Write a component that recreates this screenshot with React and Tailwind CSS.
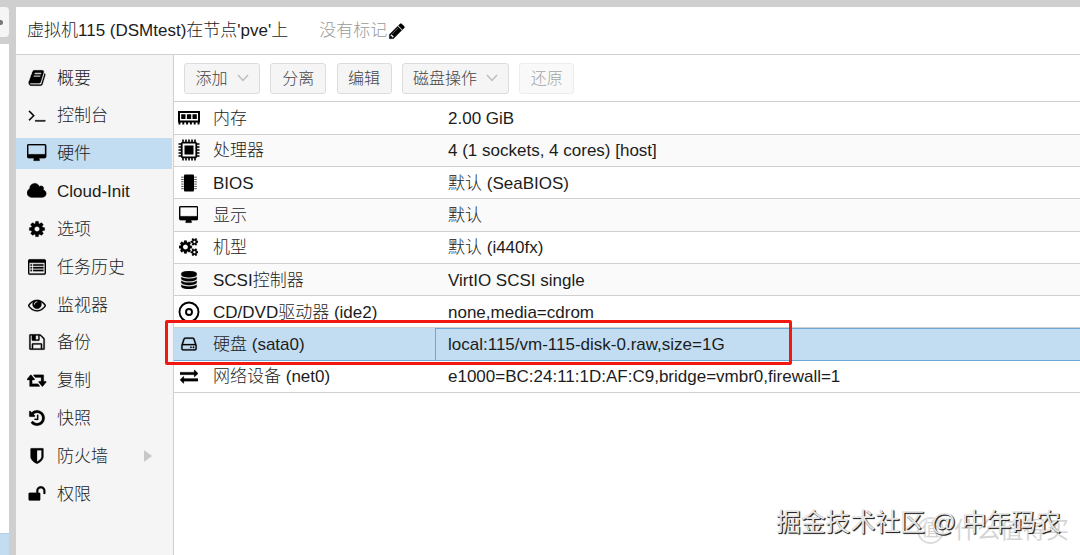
import React, { useState } from 'react';
import clsx from 'clsx';

// Font Awesome 4 outlines, 1792 units per em
const PATHS = {
  book: 'M1703 478q40 57 18 129l-275 906q-19 64-76.5 107.5t-122.5 43.5h-923q-77 0-148.5-53.5t-99.5-131.5q-24-67-2-127 0-4 3-27t4-37q1-8-3-21.5t-3-19.5q2-11 8-21t16.5-23.5 16.5-23.5q23-38 45-91.5t30-91.5q3-10 .5-30t-.5-28q3-11 17-28t17-23q21-36 42-92t25-90q1-9-2.5-32t.5-28q4-13 22-30.5t22-22.5q19-26 42.5-84.5t27.5-96.5q1-8-3-25.5t-2-26.5q2-8 9-18t18-23 17-21q8-12 16.5-30.5t15-35 16-36 19.5-32 26.5-23.5 36-11.5 47.5 5.5l-1 3q38-9 51-9h761q74 0 114 56t18 130l-274 906q-36 119-71.5 153.5t-128.5 34.5h-869q-27 0-38 15-11 16-1 43 24 70 144 70h923q29 0 56-15.5t35-41.5l300-987q7-22 5-57 38 15 59 43zm-1064 2q-4 13 2 22.5t20 9.5h608q13 0 25.5-9.5t16.5-22.5l21-64q4-13-2-22.5t-20-9.5h-608q-13 0-25.5 9.5t-16.5 22.5zm-83 256q-4 13 2 22.5t20 9.5h608q13 0 25.5-9.5t16.5-22.5l21-64q4-13-2-22.5t-20-9.5h-608q-13 0-25.5 9.5t-16.5 22.5z',
  terminal: 'M649 983l-466 466q-10 10-23 10t-23-10l-50-50q-10-10-10-23t10-23l393-393-393-393q-10-10-10-23t10-23l50-50q10-10 23-10t23 10l466 466q10 10 10 23t-10 23zm1079 457v64q0 14-9 23t-23 9h-960q-14 0-23-9t-9-23v-64q0-14 9-23t23-9h960q14 0 23 9t9 23z',
  desktop: 'M1728 992v-832q0-13-9.5-22.5t-22.5-9.5h-1600q-13 0-22.5 9.5t-9.5 22.5v832q0 13 9.5 22.5t22.5 9.5h1600q13 0 22.5-9.5t9.5-22.5zm128-832v1088q0 66-47 113t-113 47h-544q0 37 16 77.5t32 71 16 43.5q0 26-19 45t-45 19h-512q-26 0-45-19t-19-45q0-14 16-44t32-70 16-78h-544q-66 0-113-47t-47-113v-1088q0-66 47-113t113-47h1600q66 0 113 47t47 113z',
  cloud: 'M1856 1152q0 159-112.5 271.5t-271.5 112.5h-1088q-185 0-316.5-131.5t-131.5-316.5q0-132 71-241.5t187-163.5q-2-28-2-43 0-212 150-362t362-150q158 0 286.5 88t187.5 230q70-62 166-62 106 0 181 75t75 181q0 75-41 138 129 30 213 134.5t84 239.5z',
  cog: 'M1152 896q0-106-75-181t-181-75-181 75-75 181 75 181 181 75 181-75 75-181zm512-109v222q0 12-8 23t-20 13l-185 28q-19 54-39 91 35 50 107 138 10 12 10 25t-9 23q-27 37-99 108t-94 71q-12 0-26-9l-138-108q-44 23-91 38-16 136-29 186-7 28-36 28h-222q-14 0-24.5-8.5t-11.5-21.5l-28-184q-49-16-90-37l-141 107q-10 9-25 9-14 0-25-11-126-114-165-168-7-10-7-23 0-12 8-23 15-21 51-66.5t54-70.5q-27-50-41-99l-183-27q-13-2-21-12.5t-8-23.5v-222q0-12 8-23t19-13l186-28q14-46 39-92-40-57-107-138-10-12-10-24 0-10 9-23 26-36 98.5-107.5t94.5-71.5q13 0 26 10l138 107q44-23 91-38 16-136 29-186 7-28 36-28h222q14 0 24.5 8.5t11.5 21.5l28 184q49 16 90 37l142-107q9-9 24-9 13 0 25 10 129 119 165 170 7 8 7 22 0 12-8 23-15 21-51 66.5t-54 70.5q26 50 41 98l183 28q13 2 21 12.5t8 23.5z',
  list: 'M160 128h1472q66 0 113 47t47 113v1216q0 66-47 113t-113 47H160q-66 0-113-47t-47-113V288q0-66 47-113t113-47zM128 480v1024q0 32 32 32h1472q32 0 32-32V480zM256 620h128v160H256zM512 620h1024v160H512zM256 890h128v160H256zM512 890h1024v160H512zM256 1160h128v160H256zM512 1160h1024v160H512z',
  eye: 'M1664 960q-152-236-381-353 61 104 61 225 0 185-131.5 316.5t-316.5 131.5-316.5-131.5-131.5-316.5q0-121 61-225-229 117-381 353 133 205 333.5 326.5t434.5 121.5 434.5-121.5 333.5-326.5zm-720-384q0-20-14-34t-34-14q-125 0-214.5 89.5t-89.5 214.5q0 20 14 34t34 14 34-14 14-34q0-86 61-147t147-61q20 0 34-14t14-34zm848 384q0 34-20 69-140 230-376.5 368.5t-499.5 138.5-499.5-139-376.5-368q-20-35-20-69t20-69q140-229 376.5-368t499.5-139 499.5 139 376.5 368q20 35 20 69z',
  floppy: 'M512 1536h768v-384h-768v384zm896 0h128v-896q0-14-10-38.5t-20-34.5l-281-281q-10-10-34-20t-39-10v416q0 40-28 68t-68 28h-576q-40 0-68-28t-28-68v-416h-128v1280h128v-416q0-40 28-68t68-28h832q40 0 68 28t28 68v416zm-384-928v-320q0-13-9.5-22.5t-22.5-9.5h-192q-13 0-22.5 9.5t-9.5 22.5v320q0 13 9.5 22.5t22.5 9.5h192q13 0 22.5-9.5t9.5-22.5zm640 32v928q0 40-28 68t-68 28h-1344q-40 0-68-28t-28-68v-1344q0-40 28-68t68-28h928q40 0 88 20t76 48l280 280q28 28 48 76t20 88z',
  retweet: 'M1216 1504q0 13-9.5 22.5t-22.5 9.5h-960q-8 0-13.5-2t-9-7-5.5-8-3-11.5-1-11.5v-600h-192q-26 0-45-19t-19-45q0-24 15-41l320-384q19-22 49-22t49 22l320 384q15 17 15 41 0 26-19 45t-45 19h-192v384h576q16 0 25 11l160 192q7 10 7 21zm640-416q0 24-15 41l-320 384q-20 23-49 23t-49-23l-320-384q-15-17-15-41 0-26 19-45t45-19h192v-384h-576q-16 0-25-12l-160-192q-7-9-7-20 0-13 9.5-22.5t22.5-9.5h960q8 0 13.5 2t9 7 5.5 8 3 11.5 1 11.5v600h192q26 0 45 19t19 45z',
  history: 'M1664 896q0 156-61 298t-164 245-245 164-298 61q-172 0-327-72.5t-264-204.5q-7-10-6.5-22.5t8.5-20.5l137-138q10-9 25-9 16 2 23 12 73 95 179 147t225 52q104 0 198.5-40.5t163.5-109.5 109.5-163.5 40.5-198.5-40.5-198.5-109.5-163.5-163.5-109.5-198.5-40.5q-98 0-188 35.5t-160 101.5l137 138q31 30 14 69-17 40-59 40h-448q-26 0-45-19t-19-45v-448q0-42 40-59 39-17 69 14l130 129q107-101 244.5-156.5t284.5-55.5q156 0 298 61t245 164 164 245 61 298zm-640-288v448q0 14-9 23t-23 9h-320q-14 0-23-9t-9-23v-64q0-14 9-23t23-9h224v-352q0-14 9-23t23-9h64q14 0 23 9t9 23z',
  shield: 'M1344 960v-640h-448v1137q119-63 213-137 235-184 235-360zm192-768v768q0 86-33.5 170.5t-83 150-118 127.5-126.5 103-121 77.5-89.5 49.5-42.5 20q-12 6-26 6t-26-6q-16-7-42.5-20t-89.5-49.5-121-77.5-126.5-103-118-127.5-83-150-33.5-170.5v-768q0-26 19-45t45-19h1152q26 0 45 19t19 45z',
  unlock: 'M1728 576v256q0 26-19 45t-45 19h-64q-26 0-45-19t-19-45v-256q0-106-75-181t-181-75-181 75-75 181v192h96q40 0 68 28t28 68v576q0 40-28 68t-68 28h-960q-40 0-68-28t-28-68v-576q0-40 28-68t68-28h672v-192q0-185 131.5-316.5t316.5-131.5 316.5 131.5 131.5 316.5z',
  cogs: 'M896 896q0-106-75-181t-181-75-181 75-75 181 75 181 181 75 181-75 75-181zm768 512q0-52-38-90t-90-38-90 38-38 90q0 53 37.5 90.5t90.5 37.5 90.5-37.5 37.5-90.5zm0-1024q0-52-38-90t-90-38-90 38-38 90q0 53 37.5 90.5t90.5 37.5 90.5-37.5 37.5-90.5zm-384 421v185q0 10-7 19.5t-16 10.5l-155 24q-11 35-32 76 34 48 90 115 7 11 7 20 0 12-7 19-23 30-82.5 89.5t-78.5 59.5q-11 0-21-7l-115-90q-37 19-77 31-11 108-23 155-7 24-30 24h-186q-11 0-20-7.5t-10-17.5l-23-153q-34-10-75-31l-118 89q-7 7-20 7-11 0-21-8-144-133-144-160 0-9 7-19 10-14 41-53t47-61q-23-44-35-82l-152-24q-10-1-17-9.5t-7-19.5v-185q0-10 7-19.5t16-10.5l155-24q11-35 32-76-34-48-90-115-7-11-7-20 0-12 7-20 22-30 82-89t79-59q11 0 21 7l115 90q34-18 77-32 11-108 23-154 7-24 30-24h186q11 0 20 7.5t10 17.5l23 153q34 10 75 31l118-89q8-7 20-7 11 0 21 8 144 133 144 160 0 8-7 19-12 16-42 54t-45 60q23 48 34 82l152 23q10 2 17 10.5t7 19.5zm640 533v140q0 16-149 31-12 27-30 52 51 113 51 138 0 4-4 7-122 71-124 71-8 0-46-47t-52-68q-20 2-30 2t-30-2q-14 21-52 68t-46 47q-2 0-124-71-4-3-4-7 0-25 51-138-18-25-30-52-149-15-149-31v-140q0-16 149-31 13-29 30-52-51-113-51-138 0-4 4-7 4-2 35-20t59-34 30-16q8 0 46 46.5t52 67.5q20-2 30-2t30 2q51-71 92-112l6-2q4 0 124 70 4 3 4 7 0 25-51 138 17 23 30 52 149 15 149 31zm0-1024v140q0 16-149 31-12 27-30 52 51 113 51 138 0 4-4 7-122 71-124 71-8 0-46-47t-52-68q-20 2-30 2t-30-2q-14 21-52 68t-46 47q-2 0-124-71-4-3-4-7 0-25 51-138-18-25-30-52-149-15-149-31v-140q0-16 149-31 13-29 30-52-51-113-51-138 0-4 4-7 4-2 35-20t59-34 30-16q8 0 46 46.5t52 67.5q20-2 30-2t30 2q51-71 92-112l6-2q4 0 124 70 4 3 4 7 0 25-51 138 17 23 30 52 149 15 149 31z',
  database: 'M896 768q237 0 443-43t325-127v170q0 69-103 128t-280 93.5-385 34.5-385-34.5-280-93.5-103-128v-170q119 84 325 127t443 43zm0 768q237 0 443-43t325-127v170q0 69-103 128t-280 93.5-385 34.5-385-34.5-280-93.5-103-128v-170q119 84 325 127t443 43zm0-384q237 0 443-43t325-127v170q0 69-103 128t-280 93.5-385 34.5-385-34.5-280-93.5-103-128v-170q119 84 325 127t443 43zm0-1152q208 0 385 34.5t280 93.5 103 128v128q0 69-103 128t-280 93.5-385 34.5-385-34.5-280-93.5-103-128v-128q0-69 103-128t280-93.5 385-34.5z',
  hdd: 'M1168 1216q0 33-23.5 56.5t-56.5 23.5-56.5-23.5-23.5-56.5 23.5-56.5 56.5-23.5 56.5 23.5 23.5 56.5zm256 0q0 33-23.5 56.5t-56.5 23.5-56.5-23.5-23.5-56.5 23.5-56.5 56.5-23.5 56.5 23.5 23.5 56.5zm112 160v-320q0-13-9.5-22.5t-22.5-9.5h-1216q-13 0-22.5 9.5t-9.5 22.5v320q0 13 9.5 22.5t22.5 9.5h1216q13 0 22.5-9.5t9.5-22.5zm-1230-480h1180l-157-482q-4-13-16-21.5t-26-8.5h-782q-14 0-26 8.5t-16 21.5zm1358 160v320q0 66-47 113t-113 47h-1216q-66 0-113-47t-47-113v-320q0-25 16-75l197-606q17-53 63-86t101-33h782q55 0 101 33t63 86l197 606q16 50 16 75z',
  exchange: 'M1792 1184v192q0 13-9.5 22.5t-22.5 9.5h-1376v192q0 13-9.5 22.5t-22.5 9.5q-12 0-24-10l-319-320q-9-9-9-22 0-14 9-23l320-320q9-9 23-9 13 0 22.5 9.5t9.5 22.5v192h1376q13 0 22.5 9.5t9.5 22.5zm0-544q0 14-9 23l-320 320q-9 9-23 9-13 0-22.5-9.5t-9.5-22.5v-192h-1376q-13 0-22.5-9.5t-9.5-22.5v-192q0-13 9.5-22.5t22.5-9.5h1376v-192q0-14 9-23t23-9q12 0 24 10l319 319q9 9 9 23z',
  pencil: 'M491 1536l91-91-235-235-91 91v107h128v128h107zm523-928q0-22-22-22-10 0-17 7l-542 542q-7 7-7 17 0 22 22 22 10 0 17-7l542-542q7-7 7-17zm-54-192l416 416-832 832h-416v-416zm683 96q0 53-37 90l-166 166-416-416 166-165q36-38 90-38 53 0 91 38l235 234q37 39 37 91z',
};

const BOXES = {
  desktop: '-64 0 1920 1792',
  cloud: '-64 0 1920 1792',
  retweet: '-64 0 1920 1792',
  cogs: '0 0 1920 1792',
};

function Fa({ name, className = 'h-[18px]' }) {
  return (
    <svg viewBox={BOXES[name] || '0 0 1792 1792'} className={clsx('shrink-0', className)} fill="currentColor" fillRule="evenodd" stroke="currentColor" strokeWidth="25">
      <path d={PATHS[name]} />
    </svg>
  );
}

function MemoryIcon() {
  return (
    <svg viewBox="0 0 22 14" className="w-[22px] h-[14px]" fill="none" stroke="#000">
      <path d="M1 1h20v9.5H1z" strokeWidth="2" />
      <path d="M3.2 3.2h4.3v4.8H3.2zM8.9 3.2h4.3v4.8H8.9zM14.5 3.2h4.3v4.8h-4.3z" fill="#000" stroke="none" />
      <path d="M1.5 11v2.5M5.3 11v2.5M9.1 11v2.5M12.9 11v2.5M16.7 11v2.5M20.5 11v2.5" strokeWidth="1.9" />
    </svg>
  );
}

function CpuIcon() {
  return (
    <svg viewBox="0 0 22 22" className="w-[22px] h-[22px]" fill="none" stroke="#000">
      <rect x="3.7" y="3.7" width="14.6" height="14.6" rx="1" strokeWidth="1.8" />
      <rect x="6.5" y="6.5" width="9" height="9" fill="#000" stroke="none" />
      <path d="M5 0.5v3M8 0.5v3M11 0.5v3M14 0.5v3M17 0.5v3M5 18.5v3M8 18.5v3M11 18.5v3M14 18.5v3M17 18.5v3M0.5 5h3M0.5 8h3M0.5 11h3M0.5 14h3M0.5 17h3M18.5 5h3M18.5 8h3M18.5 11h3M18.5 14h3M18.5 17h3" strokeWidth="1.6" />
    </svg>
  );
}

function BiosIcon() {
  return (
    <svg viewBox="0 0 18 18" className="w-[18px] h-[18px]">
      <rect x="4" y="0.5" width="10" height="17" rx="1" fill="#000" />
      <path d="M1.2 3.2h2.6M1.2 5.5h2.6M1.2 7.8h2.6M1.2 10.1h2.6M1.2 12.4h2.6M1.2 14.7h2.6M14.2 3.2h2.6M14.2 5.5h2.6M14.2 7.8h2.6M14.2 10.1h2.6M14.2 12.4h2.6M14.2 14.7h2.6" stroke="#555" />
    </svg>
  );
}

function DiscIcon() {
  return (
    <svg viewBox="0 0 22 22" className="w-[22px] h-[22px]" fill="none" stroke="#000" strokeWidth="1.9">
      <circle cx="11" cy="11" r="9.5" />
      <circle cx="11" cy="11" r="3" />
    </svg>
  );
}

function Chevron() {
  return (
    <svg viewBox="0 0 12 8" className="w-3 h-2 ml-[9px]" fill="none" stroke="#bdbdbd" strokeWidth="1.5">
      <path d="M1 1l5 5.5L11 1" />
    </svg>
  );
}

const NAV = [
  { icon: 'book', label: '概要' },
  { icon: 'terminal', label: '控制台' },
  { icon: 'desktop', label: '硬件' },
  { icon: 'cloud', label: 'Cloud-Init' },
  { icon: 'cog', label: '选项' },
  { icon: 'list', label: '任务历史' },
  { icon: 'eye', label: '监视器' },
  { icon: 'floppy', label: '备份' },
  { icon: 'retweet', label: '复制' },
  { icon: 'history', label: '快照' },
  { icon: 'shield', label: '防火墙', sub: true },
  { icon: 'unlock', label: '权限' },
];

const HARDWARE = [
  { id: 'memory', icon: <MemoryIcon />, name: '内存', value: '2.00 GiB' },
  { id: 'cpu', icon: <CpuIcon />, name: '处理器', value: '4 (1 sockets, 4 cores) [host]' },
  { id: 'bios', icon: <BiosIcon />, name: 'BIOS', value: '默认 (SeaBIOS)' },
  { id: 'vga', icon: <Fa name="desktop" />, name: '显示', value: '默认' },
  { id: 'machine', icon: <Fa name="cogs" />, name: '机型', value: '默认 (i440fx)' },
  { id: 'scsihw', icon: <Fa name="database" />, name: 'SCSI控制器', value: 'VirtIO SCSI single' },
  { id: 'ide2', icon: <DiscIcon />, name: 'CD/DVD驱动器 (ide2)', value: 'none,media=cdrom' },
  { id: 'sata0', icon: <Fa name="hdd" />, name: '硬盘 (sata0)', value: 'local:115/vm-115-disk-0.raw,size=1G' },
  { id: 'net0', icon: <Fa name="exchange" />, name: '网络设备 (net0)', value: 'e1000=BC:24:11:1D:AF:C9,bridge=vmbr0,firewall=1' },
];

const BUTTONS = [
  { label: '添加', menu: true, width: 'w-[76px]' },
  { label: '分离', width: 'w-[56px]' },
  { label: '编辑', width: 'w-[55px]' },
  { label: '磁盘操作', menu: true, width: 'w-[107px]' },
  { label: '还原', disabled: true, width: 'w-[55px]' },
];

export default function App() {
  const [tab, setTab] = useState('硬件');
  const [selected, setSelected] = useState('sata0');

  return (
    <div className="relative flex w-[1080px] h-[555px] overflow-hidden bg-[#cfcfcf] pt-[7px] text-[17px] leading-5 font-light text-[#1c1c1c] font-['Liberation_Sans','Noto_Sans_CJK_SC',sans-serif]">
      {/* edge of the resource tree */}
      <div className="w-[9px] mr-[7px] shrink-0 flex flex-col">
        <div className="h-[30px] mb-[7px] bg-[#f5f5f5] rounded-r-sm flex items-center overflow-hidden">
          <span className="w-[3px] h-[5px] bg-[#777] rounded-r-full" />
        </div>
        <div className="flex-1 bg-white" />
        <div className="h-[22px] bg-[#c2ddf2] border-t border-[#b5cfe4]" />
      </div>

      <div className="flex-1 flex flex-col bg-white min-w-0">
        <div className="h-[48px] shrink-0 flex items-center pl-[11px] border-b border-[#d0d0d0]">
          <h1 className="whitespace-pre pt-px">虚拟机115 (DSMtest)在节点'pve'上</h1>
          <span className="ml-[31px] pt-px text-[#9a9a9a]">没有标记</span>
          <Fa name="pencil" className="h-[18px] ml-px text-black" />
        </div>

        <div className="flex flex-1 min-h-0">
          <nav className="w-[158px] shrink-0 bg-[#f5f5f5] border-r border-[#d0d0d0] pt-[4px]">
            {NAV.map(n => (
              <div key={n.label} onClick={() => setTab(n.label)} className="h-[37.85px] pt-[3px] pr-px">
                <div className={clsx('h-[31px] flex items-center pl-[11px]', tab === n.label && 'bg-[#c2ddf2]')}>
                  <span className="w-5 flex justify-center text-black"><Fa name={n.icon} /></span>
                  <span className="ml-[10px] pt-[2px] whitespace-nowrap">{n.label}</span>
                  {n.sub && <span className="ml-auto mr-[20px] border-y-[6px] border-y-transparent border-l-[8px] border-l-[#c8c8c8]" />}
                </div>
              </div>
            ))}
          </nav>

          <main className="flex-1 flex flex-col min-w-0">
            <div className="h-[47.4px] shrink-0 flex items-center pl-[10px] border-b border-[#d0d0d0] text-[16px]">
              {BUTTONS.map(b => (
                <button key={b.label} disabled={b.disabled} className={clsx('h-[31px] mr-[10.3px] flex items-center justify-center rounded-[3px] border border-[#dcdcdc] bg-[#f5f5f5] text-[#444]', b.width, b.disabled && 'opacity-50')}>
                  <span className="pt-px">{b.label}</span>
                  {b.menu && <Chevron />}
                </button>
              ))}
            </div>

            {HARDWARE.map((h, i) => {
              const active = h.id === selected;
              return (
                <div key={h.id} onClick={() => setSelected(h.id)} className={clsx('h-[32.3px] shrink-0 flex border-b', active ? 'bg-[#c2ddf2] border-[#6ba8d8]' : 'border-[#d0d0d0]', !active && i % 2 === 1 && 'bg-[#fafafa]')}>
                  <div className="w-[261px] shrink-0 flex items-center pl-[3px]">
                    <span className="w-[23px] flex justify-center text-black">{h.icon}</span>
                    <span className="ml-[13px] pt-[2px] whitespace-nowrap">{h.name}</span>
                  </div>
                  <div className={clsx('flex-1 flex items-center border-l border-t pt-px pl-[12px] whitespace-nowrap', active ? 'border-[#6ba8d8]' : 'border-transparent')}>{h.value}</div>
                </div>
              );
            })}
          </main>
        </div>
      </div>

      {/* highlight frame */}
      <div className="absolute left-[165px] top-[320px] w-[627px] h-[45px] border-[3px] border-[#f01810] rounded-[2px]" />

      {/* watermarks */}
      <div className="absolute left-[917px] top-[515px] flex items-center text-[23px] leading-[30px] font-normal text-[#d4d4d4] whitespace-nowrap">
        <span className="w-[27px] h-[27px] mr-[10px] rounded-full border-2 border-[#dcdcdc] flex items-center justify-center text-[18px]">值</span>
        什么值得买
      </div>
      <div className="absolute left-[776px] top-[507px] text-[24.8px] leading-[32px] font-normal text-[#e6e6e6] whitespace-nowrap [word-spacing:-1px] [text-shadow:1px_1px_1px_#222,1px_1px_0_#555]">掘金技术社区 @ 中年码农</div>
    </div>
  );
}
